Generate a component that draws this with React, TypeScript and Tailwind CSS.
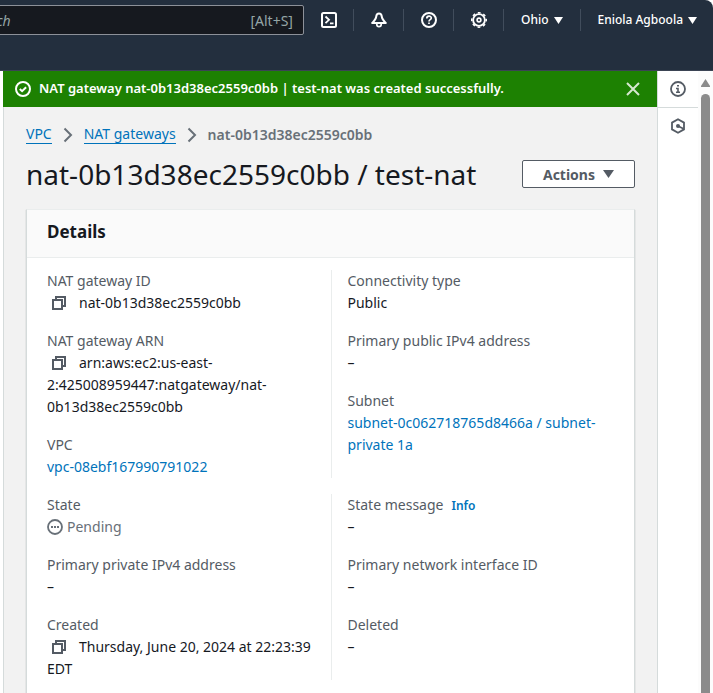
import type { ReactNode } from "react";

function Icon({ children, className = "" }: { children: ReactNode; className?: string }) {
  return (
    <svg
      viewBox="0 0 16 16"
      className={`size-4 shrink-0 ${className}`}
      fill="none"
      stroke="currentColor"
      strokeWidth="2"
      aria-hidden="true"
    >
      {children}
    </svg>
  );
}

function Caret({ className }: { className: string }) {
  return (
    <svg viewBox="0 0 10 8" preserveAspectRatio="none" className={`shrink-0 ${className}`} fill="currentColor" aria-hidden="true">
      <path d="M0 0h10L5 8z" />
    </svg>
  );
}

function HeaderButton({ label, last = false, children }: { label: string; last?: boolean; children: ReactNode }) {
  return (
    <button
      type="button"
      aria-label={label}
      className={`flex h-[22px] items-center whitespace-nowrap border-[#414d5c] ${last ? "" : "border-r"}`}
    >
      {children}
    </button>
  );
}

function Header() {
  return (
    <div className="shrink-0 bg-white">
      <header className="flex h-[71px] items-start overflow-hidden rounded-tr-lg border-b border-[#3b4454] bg-[#232f3e] text-white">
        <div className="flex h-10 min-w-0 flex-1 items-center justify-end">
          <label className="flex h-[30px] w-[346px] shrink-0 items-center rounded-r-xs border border-[#8d9199] bg-[#16191f] px-[10px] text-[14px] text-[#95a5a6]">
            <input
              type="search"
              placeholder="Search"
              className="min-w-0 flex-1 bg-transparent italic outline-none placeholder:text-[#95a5a6]"
            />
            <span>[Alt+S]</span>
          </label>
        </div>
        <div className="flex h-10 shrink-0 items-center text-[12px] font-medium">
          <HeaderButton label="CloudShell">
            <span className="pl-[17px] pr-4">
              <Icon>
                <rect x="1" y="1" width="14" height="14" rx="1.5" />
                <path d="m4.5 4.5 3.5 3.3-3.5 3.3M9 11.3h3.5" strokeWidth="1.8" />
              </Icon>
            </span>
          </HeaderButton>
          <HeaderButton label="Notifications">
            <span className="pl-[17px] pr-4">
              <Icon>
                <path d="M8 1.400C6.600 1.400 5.400 2.600 5.200 4.600 5 7 3.400 8.600 1.200 11h13.600C12.600 8.600 11 7 10.800 4.600 10.600 2.600 9.400 1.400 8 1.400z" strokeLinejoin="round" />
                <path d="M5.800 11.500v1a2.200 2.200 0 0 0 4.400 0v-1" strokeWidth="1.700" />
              </Icon>
            </span>
          </HeaderButton>
          <HeaderButton label="Help">
            <span className="pl-[17px] pr-4">
              <Icon>
                <circle cx="8" cy="8" r="7" />
                <path d="M5.800 6.400C5.800 3.400 10.300 3.500 10.300 6c0 1.700-2.300 1.600-2.300 3.400M8 10.500v1.600" strokeWidth="1.700" />
              </Icon>
            </span>
          </HeaderButton>
          <HeaderButton label="Settings">
            <span className="pl-[17px] pr-4">
              <Icon>
                <circle cx="8" cy="8" r="5.900" strokeWidth="1.900" />
                <circle cx="8" cy="8" r="7.300" strokeWidth="1.400" strokeDasharray="2.867 2.867" strokeDashoffset="1.433" />
                <circle cx="8" cy="8" r="1.900" strokeWidth="1.600" />
              </Icon>
            </span>
          </HeaderButton>
          <HeaderButton label="Region: Ohio">
            <span className="flex items-center gap-[6px] px-[17px]">
              Ohio
              <Caret className="h-[7px] w-[9px]" />
            </span>
          </HeaderButton>
          <HeaderButton label="Account: Eniola Agboola" last>
            <span className="flex items-center gap-[5px] px-4">
              Eniola Agboola
              <Caret className="h-[7px] w-[9px]" />
            </span>
          </HeaderButton>
        </div>
      </header>
    </div>
  );
}

function Flashbar() {
  return (
    <div role="status" className="flex h-9 shrink-0 items-center bg-[#1d8102] pl-3 pr-4 text-white">
      <Icon>
        <circle cx="8" cy="8" r="7" />
        <path d="m4.800 8 2.300 2.200 4-4" />
      </Icon>
      <p className="min-w-0 flex-1 pl-2 text-[13px] font-semibold">
        NAT gateway nat-0b13d38ec2559c0bb | test-nat was created successfully.
      </p>
      <button type="button" aria-label="Dismiss" className="text-[#d6e8d0]">
        <Icon>
          <path d="m2 2 12 12M14 2 2 14" />
        </Icon>
      </button>
    </div>
  );
}

function Separator() {
  return (
    <Icon className="text-[#687078]">
      <path d="m4.500 1.500 6.500 6.500-6.500 6.500" />
    </Icon>
  );
}

function Breadcrumbs() {
  return (
    <nav aria-label="Breadcrumbs">
      <ol className="flex items-center gap-2 text-[14px] leading-[18px]">
        <li>
          <a href="#vpc" className="block border-b border-[#0073bb] text-[#0073bb]">VPC</a>
        </li>
        <li aria-hidden="true"><Separator /></li>
        <li>
          <a href="#nat-gateways" className="block border-b border-[#0073bb] text-[#0073bb]">NAT gateways</a>
        </li>
        <li aria-hidden="true"><Separator /></li>
        <li className="font-semibold text-[#687078]">nat-0b13d38ec2559c0bb</li>
      </ol>
    </nav>
  );
}

function CopyButton({ label }: { label: string }) {
  return (
    <button type="button" aria-label={label} className="ml-1 mr-3 inline-flex h-4 align-[-3px] text-[#545b64]">
      <Icon>
        <path d="M2 5h9v9H2z" />
        <path d="M5 5V2h9v9h-3" />
      </Icon>
    </button>
  );
}

function Field({ label, info, children }: { label: string; info?: ReactNode; children: ReactNode }) {
  return (
    <div>
      <dt className="text-[#545b64]">
        {label}
        {info}
      </dt>
      <dd>{children}</dd>
    </div>
  );
}

function Fields({ divided = false, children }: { divided?: boolean; children: ReactNode }) {
  return (
    <dl className={`flex min-w-0 flex-col gap-4 ${divided ? "border-l border-[#eaeded] pl-4" : "pr-4"}`}>
      {children}
    </dl>
  );
}

function DetailsCard() {
  return (
    <section aria-labelledby="details" className="border border-[#d5dbdb] border-t-[#eaeded] bg-white shadow-[0_1px_1px_rgba(0,28,36,0.3)]">
      <div className="flex h-12 items-center border-b border-[#eaeded] bg-[#fafafa] px-5">
        <h2 id="details" className="pb-1 text-[17px] font-bold leading-[22px]">Details</h2>
      </div>
      <div className="flex flex-col gap-4 px-5 pb-5 pt-3 text-[14px] leading-[22px]">
        <div className="grid grid-cols-2">
          <Fields>
            <Field label="NAT gateway ID">
              <CopyButton label="Copy NAT gateway ID" />
              nat-0b13d38ec2559c0bb
            </Field>
            <Field label="NAT gateway ARN">
              <CopyButton label="Copy NAT gateway ARN" />
              arn:aws:ec2:us-east-2:425008959447:natgateway/nat-0b13d38ec2559c0bb
            </Field>
            <Field label="VPC">
              <a href="#vpc-details" className="text-[#0073bb]">vpc-08ebf167990791022</a>
            </Field>
          </Fields>
          <Fields divided>
            <Field label="Connectivity type">Public</Field>
            <Field label="Primary public IPv4 address">–</Field>
            <Field label="Subnet">
              <a href="#subnet" className="text-[#0073bb]">subnet-0c062718765d8466a / subnet-private 1a</a>
            </Field>
          </Fields>
        </div>
        <div className="grid grid-cols-2">
          <Fields>
            <Field label="State">
              <span className="flex items-center gap-1 text-[#687078]">
                <Icon>
                  <circle cx="8" cy="8" r="7" strokeWidth="1.800" />
                  <path d="M4 8h2M7 8h2M10 8h2" />
                </Icon>
                Pending
              </span>
            </Field>
            <Field label="Primary private IPv4 address">–</Field>
            <Field label="Created">
              <CopyButton label="Copy created time" />
              Thursday, June 20, 2024 at 22:23:39 EDT
            </Field>
          </Fields>
          <Fields divided>
            <Field
              label="State message"
              info={<a href="#info" className="ml-2 text-[12px] font-semibold leading-4 text-[#0073bb]">Info</a>}
            >
              –
            </Field>
            <Field label="Primary network interface ID">–</Field>
            <Field label="Deleted">–</Field>
          </Fields>
        </div>
      </div>
    </section>
  );
}

function ToolsRail() {
  return (
    <aside className="w-[41px] shrink-0 border-l border-[#d5dbdb] bg-white text-[#545b64]">
      <button type="button" aria-label="Open help panel" className="flex h-[37px] w-full items-center justify-center border-b border-[#d5dbdb]">
        <Icon>
          <circle cx="8" cy="8" r="7" strokeWidth="1.800" />
          <path d="M6 7.500h2V11M6 11.300h4M7 4.800h2" strokeWidth="1.600" />
        </Icon>
      </button>
      <button type="button" aria-label="Open diagnostics panel" className="flex h-9 w-full items-center justify-center">
        <Icon>
          <path d="M8 1.200 14 4.600v6.800L8 14.800 2 11.400V4.600z" strokeWidth="1.800" />
          <circle cx="8" cy="8" r="2" fill="currentColor" stroke="none" />
          <path d="m8 8 5.500 2.800" strokeWidth="1.700" />
        </Icon>
      </button>
    </aside>
  );
}

function ScrollTrack() {
  return (
    <div aria-hidden="true" className="flex w-[15px] shrink-0 flex-col items-center gap-[7px] bg-[#fcfcfc] pt-2 text-[#8b8b8b]">
      <svg viewBox="0 0 9 8" className="h-2 w-[9px] shrink-0" fill="currentColor">
        <path d="M4.500 0 9 7a.7.7 0 0 1-.6 1H.6A.7.7 0 0 1 0 7z" />
      </svg>
      <div className="w-[9px] flex-1 rounded-t-full bg-[#8b8b8b]" />
    </div>
  );
}

export default function App() {
  return (
    <div className="flex h-screen flex-col overflow-hidden bg-white font-['Noto_Sans','Open_Sans',sans-serif] text-[#16191f]">
      <Header />
      <div className="flex min-h-0 flex-1">
        <main className="ml-[3px] flex min-w-0 flex-1 flex-col overflow-hidden bg-[#f2f2f2]">
          <Flashbar />
          <div className="flex flex-1 flex-col border-l border-[#d5dbdb] px-[22px] pt-[18px]">
            <Breadcrumbs />
            <div className="flex items-center justify-between pb-[18px] pt-[13px]">
              <h1 className="text-[28px] leading-[34px]">nat-0b13d38ec2559c0bb / test-nat</h1>
              <button
                type="button"
                className="flex h-7 items-center gap-2 rounded-xs border border-[#545b64] bg-white px-5 text-[14px] font-bold text-[#545b64]"
              >
                Actions
                <Caret className="h-2 w-[11px]" />
              </button>
            </div>
            <DetailsCard />
          </div>
        </main>
        <ToolsRail />
        <ScrollTrack />
      </div>
    </div>
  );
}
